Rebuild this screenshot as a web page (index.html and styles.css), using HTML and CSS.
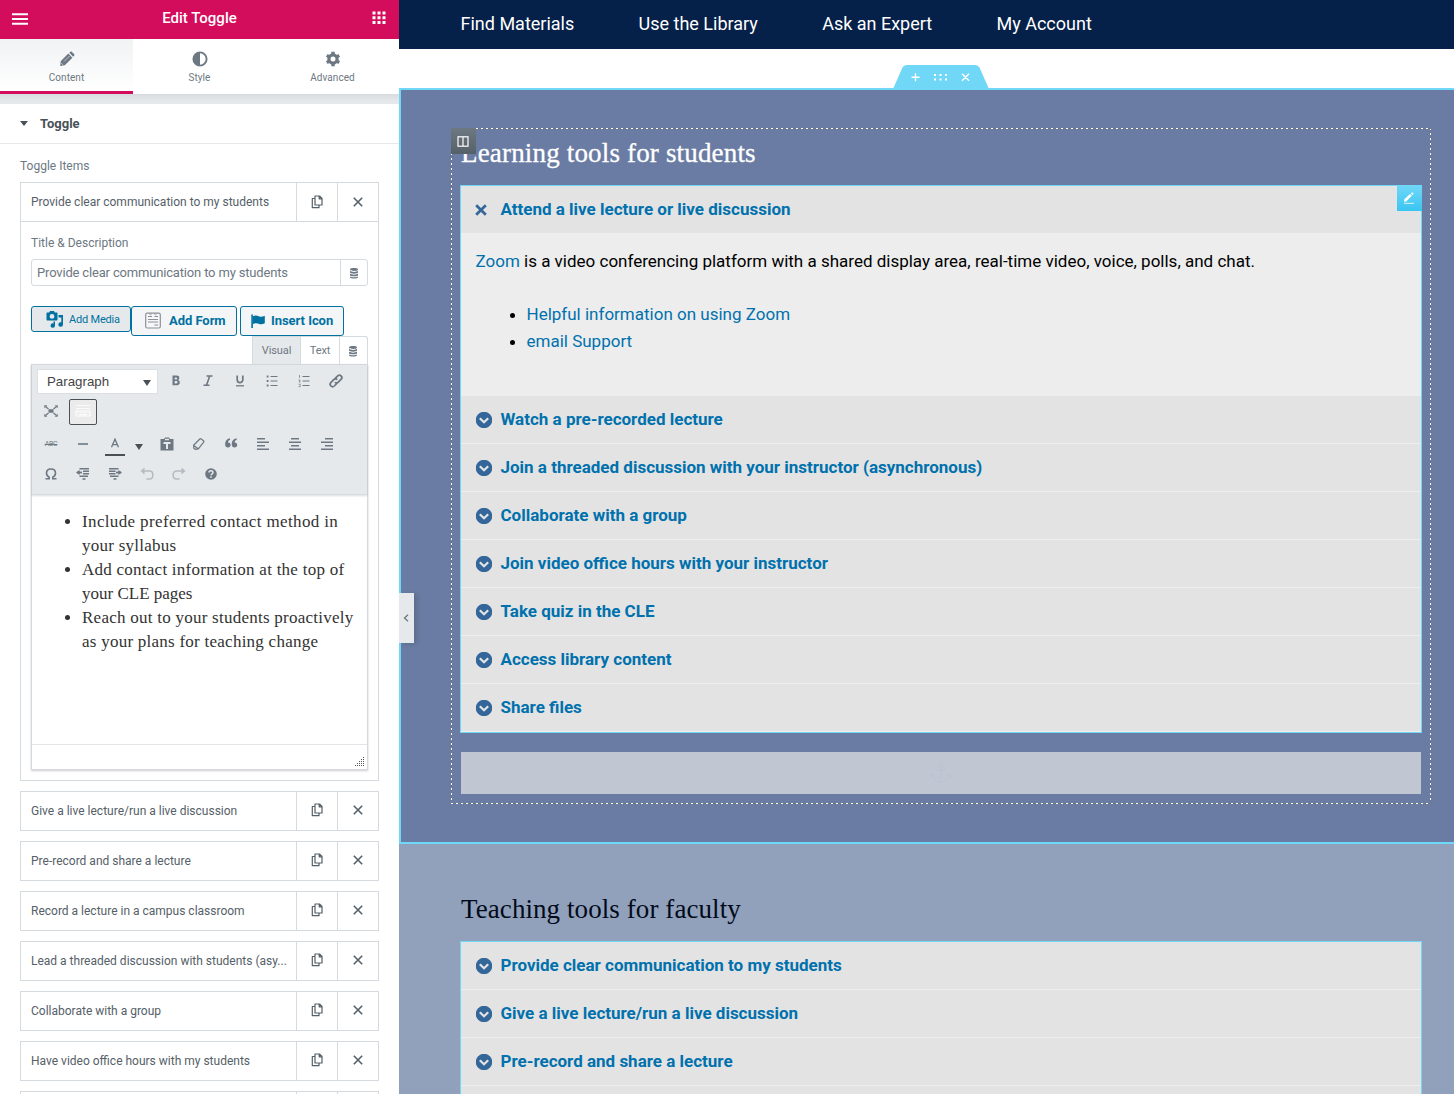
FILE: index.html
```html
<!DOCTYPE html>
<html lang="en">
<head>
<meta charset="utf-8">
<title>Edit Toggle</title>
<link rel="stylesheet" href="styles.css">
</head>
<body>
<svg class="defs" aria-hidden="true">
  <symbol id="copy" viewBox="0 0 12 14"><path d="M4 1h4.500L11 3.500V10H4zM8.200 1v2.800H11M4 3.500H1.300V12.700H8V10" fill="none" stroke="currentColor" stroke-width="1.200" stroke-linejoin="round"/></symbol>
  <symbol id="close" viewBox="0 0 10 10"><path d="M.8.8l8.400 8.400M9.200.8L.8 9.200" fill="none" stroke="currentColor" stroke-width="1.600"/></symbol>
  <symbol id="db" viewBox="0 0 10 12"><path d="M1 2.400C1 .5 9 .5 9 2.400v.3C9 4.300 1 4.300 1 2.700zM1 4.100c1.600 1.100 6.400 1.100 8 0v1.400c0 1.500-8 1.500-8 0zM1 6.800c1.600 1.100 6.400 1.100 8 0v1.400c0 1.500-8 1.500-8 0zM1 9.500c1.600 1.100 6.400 1.100 8 0v.8c0 1.600-8 1.600-8 0z" fill="currentColor"/></symbol>
  <symbol id="chev" viewBox="0 0 16 16"><circle cx="8" cy="8" r="8.200" fill="#336699"/><path d="M3.800 6.200L8 10.300l4.200-4.100" fill="none" stroke="#e3e3e3" stroke-width="2.200"/></symbol>
</svg>
<div class="app">
<aside class="panel">
  <header class="panel-head">
    <svg class="burger" width="16" height="12" viewBox="0 0 16 12"><path d="M0 1.300h16M0 6h16M0 10.700h16" stroke="#fff" stroke-width="2"/></svg>
    <h1>Edit Toggle</h1>
    <svg width="14" height="14" viewBox="0 0 14 14" fill="#fff"><path d="M.5.500h3v3h-3zM5.500.500h3v3h-3zM10.500.500h3v3h-3zM.5 5.200h3v3h-3zM5.500 5.200h3v3h-3zM10.500 5.200h3v3h-3zM.5 10h3v3h-3zM5.500 10h3v3h-3zM10.500 10h3v3h-3z"/></svg>
  </header>
  <nav class="tabs">
    <div class="tab active"><svg width="16" height="16" viewBox="0 0 16 16" fill="currentColor"><path d="M1.700 10.200L9.300 2.600l4.100 4.100-7.600 7.600-4.600.7zM10.300 1.800l.9-.9c.5-.5 1.200-.5 1.700 0l2.200 2.200c.5.500.5 1.200 0 1.700l-.9.900z"/><path d="M5 10.500l5.500-5.500" stroke="#f4f5f6" stroke-width=".6"/><path d="M2.300 12.200l1.500 1.500" stroke="#f4f5f6" stroke-width=".7"/></svg><span>Content</span></div>
    <div class="tab"><svg width="16" height="16" viewBox="0 0 16 16"><circle cx="8" cy="8" r="6.600" fill="none" stroke="currentColor" stroke-width="1.900"/><path d="M8 1.500a6.500 6.500 0 0 0 0 13z" fill="currentColor"/></svg><span>Style</span></div>
    <div class="tab"><svg width="16" height="16" viewBox="0 0 16 16" fill="none" stroke="currentColor"><circle cx="8" cy="8" r="4.100" stroke-width="3.200"/><path d="M8 .8v3M8 12.200v3M1.800 4.400l2.500 1.500M11.700 10.100l2.500 1.500M1.800 11.600l2.500-1.500M11.700 5.900l2.500-1.500" stroke-width="3.400"/></svg><span>Advanced</span></div>
  </nav>
  <div class="band"></div>
  <div class="section-title"><i class="caret"></i>Toggle</div>
  <div class="controls">
    <div class="label">Toggle Items</div>
    <div class="item open">
      <div class="row"><span class="name">Provide clear communication to my students</span><span class="act"><svg width="12" height="14"><use href="#copy"/></svg></span><span class="act"><svg width="10" height="10"><use href="#close"/></svg></span></div>
      <div class="body">
        <div class="label">Title &amp; Description</div>
        <div class="field"><span class="value">Provide clear communication to my students</span><span class="dyn"><svg width="10" height="12"><use href="#db"/></svg></span></div>
        <div class="buttons">
          <div class="btn media"><svg width="18" height="18" viewBox="0 0 18 18" fill="currentColor"><path fill-rule="evenodd" d="M1.500 2.500h1.700L4 1h4l.8 1.500h1.700c.6 0 1 .4 1 1v6c0 .6-.4 1-1 1h-9c-.6 0-1-.4-1-1v-6c0-.6.4-1 1-1zM6 4a2.400 2.400 0 1 0 0 4.800A2.400 2.400 0 0 0 6 4z"/><path d="M12.500 5H17v9.500a2.300 2.300 0 1 1-1.700-2.200V7.500h-2.800zM9 11.500v4a2.200 2.200 0 1 1-1.500-2.100v-1.900z"/></svg><span>Add Media</span></div>
          <div class="btn form"><svg width="16" height="17" viewBox="0 0 16 17" fill="none" stroke="#8c9297"><rect x=".7" y="1.200" width="14.600" height="14.800" rx="1.500" fill="#f6f7f7" stroke-width="1.200"/><path d="M3 4.500h4M9.500 4.500H13M3 7.500h10M3 10h10M9.500 13H13"/><path d="M4 1.500l1.500 1.300L7 1.500M9 1.500l1.500 1.300L12 1.500" stroke-width=".8"/></svg><span>Add Form</span></div>
          <div class="btn flag"><svg width="14" height="14" viewBox="0 0 14 14" fill="currentColor"><path d="M.3.500h1.600V14H.3zM2 2.200c2-1.200 4.100-.8 5.800 0 1.900.9 3.600.7 6-.5v7.500c-2.300 1.300-4.100 1.500-6 .6-1.700-.8-3.800-1-5.800.2z"/></svg><span>Insert Icon</span></div>
        </div>
        <div class="modes"><span class="mode on">Visual</span><span class="mode txt">Text</span><span class="mode db"><svg width="10" height="12"><use href="#db"/></svg></span></div>
        <div class="editor">
          <div class="toolbar">
            <div class="tr r1">
              <span class="select">Paragraph<i></i></span>
              <svg viewBox="0 0 20 20"><path d="M6.500 4.500h3.900c1.900 0 2.900.8 2.900 2.400 0 1.100-.5 1.800-1.500 2.100 1.200.2 2 1.100 2 2.500 0 1.900-1.300 2.800-3.300 2.800H6.500zm2.200 3.900h1.400c.7 0 1-.4 1-1s-.4-1-1.100-1H8.700zm0 4h1.500c.8 0 1.300-.4 1.300-1.100s-.4-1.200-1.400-1.200H8.700z" fill="currentColor"/></svg>
              <svg viewBox="0 0 20 20" fill="none" stroke="currentColor" stroke-width="1.600"><path d="M8.500 5h6M5.500 14.200h6M11.700 5l-3.200 9.200"/></svg>
              <svg viewBox="0 0 20 20" fill="none" stroke="currentColor" stroke-width="1.700"><path d="M7.200 4.500v4.300c0 3.800 5.600 3.800 5.600 0V4.500"/><path d="M6 14.800h8" stroke-width="1.300"/></svg>
              <svg viewBox="0 0 20 20" fill="none" stroke="currentColor"><path d="M8.500 5.500H15.500M8.500 10H15.500M8.500 14.500H15.500"/><path d="M4.700 5.500h1.800M4.700 10h1.800M4.700 14.500h1.800" stroke-width="1.800"/></svg>
              <svg viewBox="0 0 20 20" fill="none" stroke="currentColor"><path d="M8.500 5.500H15.500M8.500 10H15.500M8.500 14.500H15.500"/><path d="M5.500 4v3M4.500 9h1.700l-1.200 2h1.500M4.500 13.200h1.700v2.500H4.500" stroke-width=".7"/></svg>
              <svg viewBox="0 0 20 20" fill="none" stroke="currentColor" stroke-width="1.700"><path d="M8.700 7.900l3-3.100c2.200-2.100 5.600 1.100 3.500 3.400L12.300 11.200c-1 1-2.700.9-3.500 0M11.300 11.900l-3 3.100c-2.200 2.100-5.600-1.100-3.500-3.400L7.700 8.600c1-1 2.700-.9 3.500 0"/></svg>
            </div>
            <div class="tr r2">
              <svg viewBox="0 0 20 20"><path d="M4.500 5.500l3 2.500M15.500 5.500l-3 2.500M4.500 14.500l3-2.500M15.500 14.500l-3-2.500" stroke="currentColor" stroke-width="1.300"/><path d="M7.500 8.200h5v3.600h-5zM3.300 4.300h3l-3 3zM16.700 4.300h-3l3 3zM3.300 15.700h3l-3-3zM16.700 15.700h-3l3-3z" fill="currentColor"/></svg>
              <span class="kitchen"><svg width="16" height="16" viewBox="0 0 16 16" fill="none" stroke="#fff"><path d="M1 2.500h14M1 5.500h14" stroke-dasharray="2 .6"/><path d="M1 8h14v5H1z"/><path d="M2.500 9.700h11" stroke-dasharray="1.500 1"/><path d="M4 11.500h8"/></svg></span>
            </div>
            <div class="tr r3">
              <span class="abc">ABC</span>
              <svg viewBox="0 0 20 20"><path d="M5 10h10" stroke="currentColor" stroke-width="1.600"/></svg>
              <svg class="ink" viewBox="0 0 20 20" fill="none" stroke="currentColor"><path d="M6.500 13.200L10 5.200l3.500 8M7.700 10.700h4.600" stroke-width="1.300"/></svg>
              <i class="down"></i>
              <svg viewBox="0 0 20 20"><path fill-rule="evenodd" fill="currentColor" d="M3.500 5H7l1-1.500h4L13 5h3.500v11.500h-13V5zM8 4.700v1.500h4V4.700zM6.500 8v2h2.500v5h2v-5h2.500V8z"/></svg>
              <svg viewBox="0 0 20 20" fill="none" stroke="currentColor" stroke-width="1.200"><path d="M12.200 5l2.300 1.800c.5.400.6.900.2 1.400l-5.400 6.700-3 .4-1.500-1.200-.2-2.800L10.800 5c.4-.4 1-.4 1.400 0zM5 11.800l4.200 3"/></svg>
              <svg viewBox="0 0 20 20"><path fill="currentColor" d="M9.300 5.800C7.700 6.300 7 7.300 7 8.600c1.500-.2 2.600.8 2.600 2.400S8.500 13.500 7 13.500c-1.700 0-2.900-1.300-2.900-3.600 0-2.800 1.700-5 4.600-5.600zM15.900 5.800c-1.600.5-2.300 1.500-2.300 2.800 1.500-.2 2.600.8 2.600 2.400s-1.100 2.500-2.600 2.500c-1.700 0-2.900-1.300-2.900-3.600 0-2.800 1.700-5 4.600-5.600z"/></svg>
              <svg viewBox="0 0 20 20"><path d="M4 4.800h8M4 8.200h12M4 11.700h8M4 15.200h12" stroke="currentColor" stroke-width="1.600"/></svg>
              <svg viewBox="0 0 20 20"><path d="M6 4.800h8M4 8.200h12M6 11.700h8M4 15.200h12" stroke="currentColor" stroke-width="1.600"/></svg>
              <svg viewBox="0 0 20 20"><path d="M8 4.800h8M4 8.200h12M8 11.700h8M4 15.200h12" stroke="currentColor" stroke-width="1.600"/></svg>
            </div>
            <div class="tr r4">
              <svg viewBox="0 0 20 20"><path d="M4.500 14.700h3.700v-1.500C6.500 12.300 5.500 11 5.500 9.200 5.500 6.500 7.300 5 10 5s4.500 1.500 4.500 4.200c0 1.800-1 3.100-2.700 4v1.500h3.700" fill="none" stroke="currentColor" stroke-width="1.600"/></svg>
              <svg viewBox="0 0 20 20" fill="none" stroke="currentColor"><path d="M6.500 4.700h9.500M10 7.200h6M10 9.800h6M6.500 12.300H15M9.500 15h3" stroke-width="1.400"/><path d="M4 8.500h5" stroke-width="1.800"/><path d="M6.700 6L3 8.500 6.700 11z" fill="currentColor" stroke="none"/></svg>
              <svg viewBox="0 0 20 20" fill="none" stroke="currentColor"><path d="M4 4.700h9.500M4 7.200h6.500M4 9.800h6.500M5 12.300h8.500M8.500 15h3" stroke-width="1.400"/><path d="M11 8.500h5" stroke-width="1.800"/><path d="M13.300 6L17 8.500 13.300 11z" fill="currentColor" stroke="none"/></svg>
              <svg class="off" viewBox="0 0 20 20" fill="none" stroke="currentColor" stroke-width="1.600"><path d="M5 7h7.500c4.500 0 4.500 8 0 8H9.500"/><path d="M7.500 3.500L3.500 7l4 3.500z" fill="currentColor" stroke="none"/></svg>
              <svg class="off" viewBox="0 0 20 20" fill="none" stroke="currentColor" stroke-width="1.600"><path d="M15 7H7.500c-4.500 0-4.500 8 0 8H10.500"/><path d="M12.500 3.500l4 3.500-4 3.500z" fill="currentColor" stroke="none"/></svg>
              <svg viewBox="0 0 20 20"><circle cx="10" cy="10" r="5.800" fill="currentColor"/><path d="M8 8.500c0-2.500 4-2.300 4-.1 0 1.500-1.900 1.400-1.900 2.900M10 12.300v1.500" fill="none" stroke="#e5e8eb" stroke-width="1.500"/></svg>
            </div>
          </div>
          <ul class="doc">
            <li><span class="l1">Include preferred contact method in</span><br>your syllabus</li>
            <li>Add contact information at the top of<br><span class="l4">your CLE pages</span></li>
            <li>Reach out to your students proactively<br>as your plans for teaching change</li>
          </ul>
          <div class="status"><svg width="10" height="10" viewBox="0 0 10 10" fill="#555"><path d="M8 0h1v1H8zM6 2h1v1H6zM8 2h1v1H8zM4 4h1v1H4zM6 4h1v1H6zM8 4h1v1H8zM2 6h1v1H2zM4 6h1v1H4zM6 6h1v1H6zM8 6h1v1H8zM0 8h1v1H0zM2 8h1v1H2zM4 8h1v1H4zM6 8h1v1H6zM8 8h1v1H8z"/></svg></div>
        </div>
      </div>
    </div>
    <div class="item"><div class="row"><span class="name">Give a live lecture/run a live discussion</span><span class="act"><svg width="12" height="14"><use href="#copy"/></svg></span><span class="act"><svg width="10" height="10"><use href="#close"/></svg></span></div></div>
    <div class="item"><div class="row"><span class="name">Pre-record and share a lecture</span><span class="act"><svg width="12" height="14"><use href="#copy"/></svg></span><span class="act"><svg width="10" height="10"><use href="#close"/></svg></span></div></div>
    <div class="item"><div class="row"><span class="name">Record a lecture in a campus classroom</span><span class="act"><svg width="12" height="14"><use href="#copy"/></svg></span><span class="act"><svg width="10" height="10"><use href="#close"/></svg></span></div></div>
    <div class="item"><div class="row"><span class="name">Lead a threaded discussion with students (asy...</span><span class="act"><svg width="12" height="14"><use href="#copy"/></svg></span><span class="act"><svg width="10" height="10"><use href="#close"/></svg></span></div></div>
    <div class="item"><div class="row"><span class="name">Collaborate with a group</span><span class="act"><svg width="12" height="14"><use href="#copy"/></svg></span><span class="act"><svg width="10" height="10"><use href="#close"/></svg></span></div></div>
    <div class="item"><div class="row"><span class="name">Have video office hours with my students</span><span class="act"><svg width="12" height="14"><use href="#copy"/></svg></span><span class="act"><svg width="10" height="10"><use href="#close"/></svg></span></div></div>
    <div class="item"><div class="row"><span class="name"></span><span class="act"></span><span class="act"></span></div></div>
  </div>
</aside>
<main class="preview">
  <nav class="site-nav"><a>Find Materials</a><a>Use the Library</a><a>Ask an Expert</a><a>My Account</a></nav>
  <div class="gap"></div>
  <section class="students">
    <svg class="handle" width="96" height="24" viewBox="0 0 96 24"><path d="M0 24L9.500 2.500Q10.700 0 13.500 0h69Q85.300 0 86.500 2.500L96 24z" fill="#71d7f7"/><path d="M18.500 12.300h8M22.500 8.300v8M69 8.800l7 7M76 8.800l-7 7" stroke="#fff" stroke-width="1.400"/><path d="M41 9h2v2h-2zM46.500 9h2v2h-2zM52 9h2v2h-2zM41 13.500h2v2h-2zM46.500 13.500h2v2h-2zM52 13.500h2v2h-2z" fill="#fff"/></svg>
    <div class="column">
      <span class="col-handle"><svg width="12" height="11" viewBox="0 0 12 11" fill="none" stroke="#fff" stroke-width="1.200"><rect x="1" y=".8" width="10" height="9.400"/><path d="M6 1v9"/></svg></span>
      <h2 class="h-students">Learning tools for students</h2>
      <div class="toggle">
        <span class="edit"><svg width="12" height="12" viewBox="0 0 12 12"><path d="M1 9.800L1.300 7.300 7 1.900l1.900 1.900-5.700 5.600zM7.800 1.200l.8-.7c1-.5 2.200.7 1.700 1.700l-.7.800z" fill="#fff"/><path d="M1 11.300h10" stroke="#fff" stroke-opacity=".8"/></svg></span>
        <div class="t first"><svg width="12" height="12" viewBox="0 0 12 12"><path d="M1.200 1.200l9.600 9.600M10.800 1.200l-9.600 9.600" stroke="#336699" stroke-width="2.700"/></svg><a>Attend a live lecture or live discussion</a></div>
        <div class="content">
          <p><a>Zoom</a> is a video conferencing platform with a shared display area, real-time video, voice, polls, and chat.</p>
          <ul><li><a>Helpful information on using Zoom</a></li><li><a>email Support</a></li></ul>
        </div>
        <div class="t"><svg width="16" height="16"><use href="#chev"/></svg><a>Watch a pre-recorded lecture</a></div>
        <div class="t"><svg width="16" height="16"><use href="#chev"/></svg><a>Join a threaded discussion with your instructor (asynchronous)</a></div>
        <div class="t"><svg width="16" height="16"><use href="#chev"/></svg><a>Collaborate with a group</a></div>
        <div class="t"><svg width="16" height="16"><use href="#chev"/></svg><a>Join video office hours with your instructor</a></div>
        <div class="t"><svg width="16" height="16"><use href="#chev"/></svg><a>Take quiz in the CLE</a></div>
        <div class="t"><svg width="16" height="16"><use href="#chev"/></svg><a>Access library content</a></div>
        <div class="t"><svg width="16" height="16"><use href="#chev"/></svg><a>Share files</a></div>
      </div>
      <div class="anchor"><svg width="20" height="22" viewBox="0 0 20 22" fill="none" stroke="#b9c2d0" stroke-opacity=".5"><circle cx="10" cy="3.500" r="2.300"/><path d="M10 6v14M5 8h10M1 12c1 5 4 8 9 8s8-3 9-8M1 12l-.5 3M1 12l3 2M19 12l.5 3M19 12l-3 2"/></svg></div>
    </div>
  </section>
  <section class="faculty">
    <h2 class="h-faculty">Teaching tools for faculty</h2>
    <div class="toggle">
      <div class="t"><svg width="16" height="16"><use href="#chev"/></svg><a>Provide clear communication to my students</a></div>
      <div class="t"><svg width="16" height="16"><use href="#chev"/></svg><a>Give a live lecture/run a live discussion</a></div>
      <div class="t"><svg width="16" height="16"><use href="#chev"/></svg><a>Pre-record and share a lecture</a></div>
      <div class="t"></div>
    </div>
  </section>
  <span class="collapse"><svg width="6" height="8" viewBox="0 0 6 8"><path d="M5 .7L1.500 4 5 7.300" fill="none" stroke="#6d7882" stroke-width="1.300"/></svg></span>
</main>
</div>
</body>
</html>
```
FILE: styles.css
```css
* { box-sizing: border-box; }
body { margin: 0; font-family: Roboto, "Liberation Sans", sans-serif; overflow: hidden; }
svg { display: block; flex: none; }
.defs { position: absolute; width: 0; height: 0; }
.app { display: flex; width: 1454px; height: 1094px; overflow: hidden; }

/* Editor panel */
.panel { width: 399px; flex: none; background: #fff; color: #495157; height: 1094px; overflow: hidden; }
.panel-head { height: 39px; background: #d30c5c; display: flex; align-items: center; justify-content: space-between; padding: 0 13px 3px 12px; }
.panel-head h1 { margin: 0 1px 0 0; font-size: 15px; font-weight: 500; color: #fff; line-height: 18px; }
.panel-head .burger { margin-top: 2px; }
.tabs { display: flex; height: 55px; }
.tab { flex: 1; display: flex; flex-direction: column; align-items: center; padding-top: 12px; gap: 4px; font-size: 10px; line-height: 14px; color: #6d7882; letter-spacing: .05px; }
.tab.active { background: linear-gradient(#f1f2f4, #fff); border-bottom: 3px solid #d30c5c; }
.band { height: 10px; background: linear-gradient(#d8dcdf, #e6e9ec 80%); }
.section-title { height: 40px; border-bottom: 1px solid #e6e9ec; display: flex; align-items: center; padding-left: 20px; font-size: 13px; font-weight: 700; }
.caret { border: 4px solid transparent; border-top: 5px solid #495157; border-bottom: 0; margin-right: 12px; }
.controls { padding: 14px 20px 0; display: flex; flex-direction: column; gap: 10px; }
.label { font-size: 12px; line-height: 16px; color: #6d7882; }
.controls > .label { margin-bottom: -2px; }
.item { border: 1px solid #d5dadf; flex: none; }
.row { height: 38px; display: flex; font-size: 12px; color: #556068; }
.name { flex: 1; min-width: 0; padding: 0 0 0 10px; line-height: 38px; white-space: nowrap; }
.act { width: 41px; border-left: 1px solid #d5dadf; display: flex; align-items: center; justify-content: center; padding-bottom: 2px; }
.open { height: 599px; }
.open .row { height: 39px; border-bottom: 1px solid #d5dadf; }
.open .act { padding-bottom: 1px; }
.body { padding: 13px 10px 0; }
.field { margin-top: 8px; height: 27px; border: 1px solid #d5dadf; border-radius: 3px; display: flex; font-size: 13px; letter-spacing: -.17px; color: #6d7882; }
.value { flex: 1; padding-left: 5px; line-height: 25px; }
.dyn { width: 27px; border-left: 1px solid #d5dadf; display: flex; align-items: center; justify-content: center; color: #6d7882; }
.buttons { display: flex; margin-top: 20px; align-items: flex-start; height: 30px; }
.btn { border: 1px solid #0071a1; border-radius: 3px; color: #0071a1; background: #f3f5f6; display: flex; align-items: center; height: 30px; font-size: 13px; font-weight: 700; white-space: nowrap; letter-spacing: -.05px; }
.btn span { padding-bottom: 2px; }
.form svg { margin-bottom: 2px; }
.media { width: 100px; height: 26px; background: #e6e9ec; font-size: 11px; font-weight: 400; padding-left: 14px; gap: 5px; letter-spacing: -.2px; }
.media span { padding: 0; }
.form { width: 106px; padding-left: 13px; gap: 8px; }
.flag { width: 104px; margin-left: 3px; padding-left: 10px; gap: 6px; }
.modes { display: flex; justify-content: flex-end; height: 28px; }
.mode { border: 1px solid #d5dadf; border-bottom: 0; border-left-width: 0; display: flex; align-items: center; justify-content: center; font-size: 11px; color: #6d7882; height: 28px; letter-spacing: -.1px; }
.mode.on { width: 49px; background: #e6e9ec; border-left-width: 1px; }
.mode.txt { width: 39px; }
.mode.db { width: 28px; border-radius: 0 3px 0 0; padding-right: 1px; }
.editor { border: 1px solid #d5d8dc; height: 406px; box-shadow: 0 1px 2px #0003; }
.toolbar { height: 130px; background: #e6e9ec; border-bottom: 1px solid #d5dadf; box-shadow: 0 1px 2px #0002; color: #6d7882; display: flex; flex-direction: column; }
.tr { display: flex; align-items: center; gap: 12px; height: 30px; padding-left: 9px; }
.tr svg { width: 20px; height: 20px; }
.tr .kitchen svg { width: 16px; height: 16px; }
.tr.r1 { padding-left: 5px; height: 31px; }
.select { width: 121px; height: 25px; border: 1px solid #dcdfe2; background: #fff; font: 13.3px "Liberation Sans", Arial, sans-serif; line-height: 23px; padding: 0 6px 0 9px; color: #444; display: flex; align-items: center; justify-content: space-between; margin: 2px -4px 0 0; }
.select i, .down { border: 4px solid transparent; border-top: 6px solid #495157; border-bottom: 0; }
.select i { margin-top: 2px; }
.tr.r2 { gap: 8px; }
.kitchen { width: 28px; height: 26px; border: 1px solid #495157; border-radius: 2px; background: #ebebeb; display: flex; padding: 3px 0 0 5px; margin-top: 2px; }
.tr.r3 { height: 36px; }
.abc { width: 20px; font-size: 7px; letter-spacing: -.3px; text-decoration: line-through; text-align: center; }
.ink { box-shadow: 0 2px #495157; }
.down { margin: 5px 2px 0 -2px; }
.tr.r4 { height: 24px; }
.off { opacity: .4; }
.doc { margin: 0; padding: 15px 0 0 50px; height: 249px; font-family: "Liberation Serif", serif; font-size: 17px; line-height: 24px; letter-spacing: .25px; color: #333; white-space: nowrap; }
.l1 { letter-spacing: .36px; }
.l4 { letter-spacing: 0; }
.status { border-top: 1px solid #e2e4e7; height: 25px; display: flex; justify-content: flex-end; align-items: flex-end; padding: 0 2px 2px; }

/* Page preview */
.preview { flex: 1; position: relative; }
.site-nav { height: 49px; background: #052049; display: flex; gap: 64.300px; padding: 0 0 2px 61.500px; align-items: center; font-size: 18px; white-space: nowrap; }
.gap { height: 39px; background: #fff; }
.students { position: relative; height: 756px; background: #6a7ca3; border: 2px solid #71d7f7; border-right: 0; padding: 38px 23px 0 50px; }
.handle { position: absolute; left: 492px; top: -25px; }
.column {
  --dash: #fff 0 2px, #6f7780 2px 5px;
  position: relative; height: 676px; padding: 10px 9px 0;
  background:
    repeating-linear-gradient(90deg, var(--dash)) 0 0 / 100% 1px no-repeat,
    repeating-linear-gradient(90deg, var(--dash)) 0 100% / 100% 1px no-repeat,
    repeating-linear-gradient(var(--dash)) 0 0 / 1px 100% no-repeat,
    repeating-linear-gradient(var(--dash)) 100% 0 / 1px 100% no-repeat;
}
.col-handle { position: absolute; left: 0; top: 0; width: 25px; height: 26px; background: linear-gradient(#6d7882, #556068); display: flex; align-items: center; justify-content: center; padding-right: 1px; }
h2 { margin: 0; font-family: "Liberation Serif", serif; font-weight: 400; font-size: 27px; line-height: 32px; white-space: nowrap; }
.h-students { color: #fff; padding-left: 1px; letter-spacing: .17px; margin-top: -1px; -webkit-text-stroke: .3px #fff; }
.toggle { position: relative; border: 1px solid #71d7f7; background: #e3e3e3; }
.column .toggle { margin-top: 16px; height: 548px; }
.edit { position: absolute; right: -1px; top: -1px; width: 25px; height: 26px; background: linear-gradient(#71d7f7, #39c5f2); display: flex; align-items: center; justify-content: center; padding-right: 1px; }
.t { height: 48px; border-bottom: 1px solid #eee; display: flex; align-items: center; gap: 8.500px; padding-left: 15px; font-size: 17px; font-weight: 700; white-space: nowrap; }
.t a { padding-bottom: 2px; }
.t.first { height: 47px; border: 0; padding-left: 14px; gap: 13.500px; }
a { color: #0071ad; }
.site-nav a { color: #fff; }
.content { height: 163px; background: #ededed; padding: 15px 15px 0 14.500px; font-size: 17px; line-height: 27px; color: #000; }
.content p { margin: 0; }
.content ul { margin: 26px 0 0; padding-left: 51px; }
.anchor { margin: 19px 1px 0; height: 42px; background: #c0c6d2; display: flex; align-items: center; justify-content: center; }
.faculty { height: 260px; background: #92a1bb; padding: 49px 32px 0 61px; overflow: hidden; }
.h-faculty { color: #000a1a; padding-left: 1px; letter-spacing: .08px; }
.faculty .toggle { margin-top: 16px; }
.collapse { position: absolute; left: 0; top: 593px; width: 15px; height: 50px; background: #e6e9ec; display: flex; align-items: center; justify-content: center; box-shadow: 3px 1px 5px #0002; padding-right: 1px; }
```
